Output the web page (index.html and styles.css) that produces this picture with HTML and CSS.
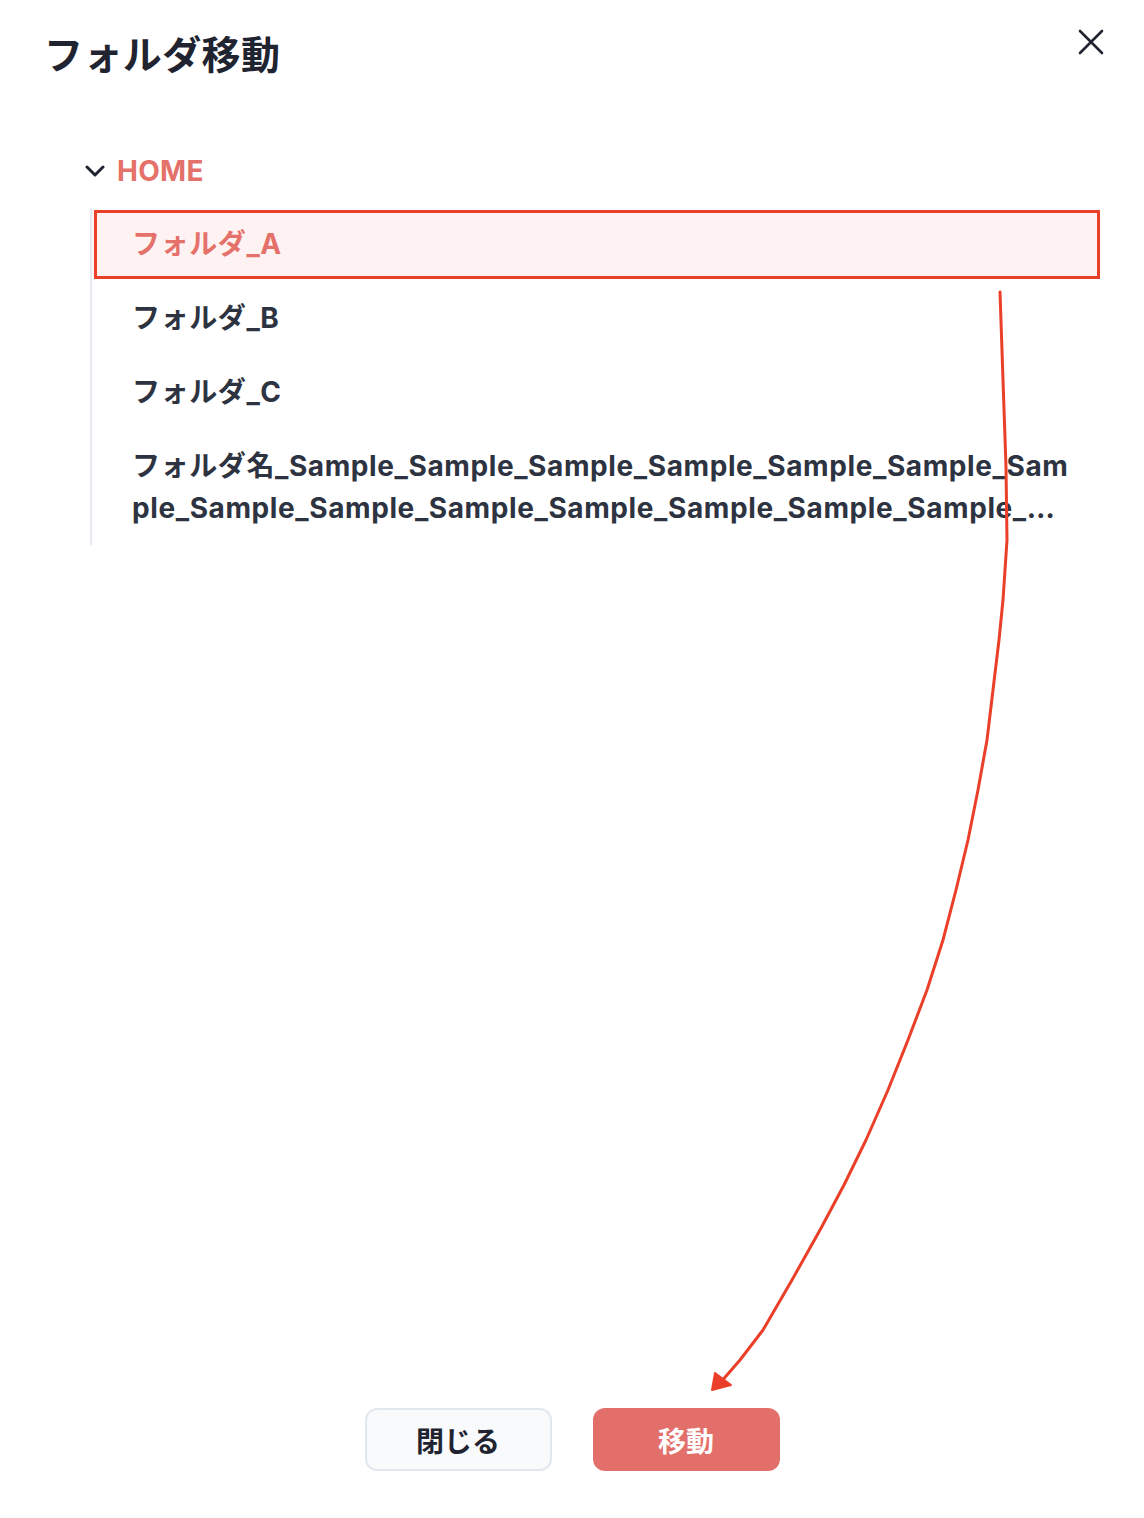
FILE: index.html
```html
<!DOCTYPE html>
<html lang="ja">
<head>
    <meta charset="UTF-8">
    <meta name="viewport" content="width=device-width, initial-scale=1.0">
    <title>フォルダ移動</title>
    <link rel="stylesheet" href="styles.css">
</head>
<body>
    <div class="modal">
        <div class="modal-header">
            <h1 class="modal-title">フォルダ移動</h1>
            <button class="close-btn" aria-label="閉じる">
                <svg width="26" height="26" viewBox="0 0 26 26">
                    <path d="M2 2 L24 24 M24 2 L2 24" stroke="#1f2430" stroke-width="2.6" stroke-linecap="round" fill="none"/>
                </svg>
            </button>
        </div>

        <div class="tree">
            <div class="tree-root">
                <svg class="chevron" width="20" height="12" viewBox="0 0 20 12">
                    <path d="M2 2 L10 10 L18 2" stroke="#1f2430" stroke-width="3" stroke-linecap="round" stroke-linejoin="round" fill="none"/>
                </svg>
                <span class="tree-root-label">HOME</span>
            </div>
            <ul class="folder-list">
                <li class="folder selected">フォルダ_A</li>
                <li class="folder">フォルダ_B</li>
                <li class="folder">フォルダ_C</li>
                <li class="folder"><span class="clamp">フォルダ名_Sample_Sample_Sample_Sample_Sample_Sample_Sample_Sample_Sample_Sample_Sample_Sample_Sample_Sample_Sample_Sample_Sample</span></li>
            </ul>
        </div>

        <div class="modal-footer">
            <button class="btn btn-secondary">閉じる</button>
            <button class="btn btn-primary">移動</button>
        </div>
    </div>

    <!-- 注釈 -->
    <svg class="annotation" width="1144" height="1518" viewBox="0 0 1144 1518">
        <rect x="95.5" y="211.5" width="1003" height="66" fill="none" stroke="#ea3f28" stroke-width="3"/>
        <polyline points="1000,292 1003,380 1006,467 1007,540 1003,600 999,640 993,690 987,740 978,790 968,840 956,890 943,940 927,990 908,1040 888,1090 866,1140 844,1185 820,1230 792,1280 763,1330 740,1360 720,1383"
            fill="none" stroke="#ea3f28" stroke-width="3" stroke-linecap="round" stroke-linejoin="round"/>
        <polygon points="712,1390 715,1373 731,1385" fill="#ea3f28" stroke="#ea3f28" stroke-width="2" stroke-linejoin="round"/>
    </svg>
</body>
</html>
```

FILE: styles.css
```css
* {
    box-sizing: border-box;
}

body {
    margin: 0;
    background: #fff;
    font-family: "Inter", "Noto Sans CJK JP", sans-serif;
    color: #2d3340;
}

.modal {
    position: relative;
    height: 1518px;
    display: flex;
    flex-direction: column;
    padding: 28px 44px 47px 46px;
}

.modal-header {
    display: flex;
    justify-content: space-between;
    align-items: flex-start;
}

.modal-title {
    margin: 0 0 0 -2px;
    font-size: 39px;
    line-height: 53px;
    font-weight: 700;
    color: #1f2430;
    letter-spacing: 0.4px;
}

.close-btn {
    border: none;
    background: none;
    padding: 0;
    margin: 1px -4px 0 0;
    width: 26px;
    height: 26px;
    cursor: pointer;
}

.tree {
    flex: 1;
    margin-top: 70px;
}

.tree-root {
    display: flex;
    align-items: center;
    height: 40px;
    padding-left: 39px;
}

.chevron {
    margin-right: 12px;
}

.tree-root-label {
    font-size: 28px;
    font-weight: 700;
    color: #e5716b;
    letter-spacing: 0.3px;
}

.folder-list {
    list-style: none;
    margin: 17px 0 0 44px;
    padding: 3px 0 4px 0;
    border-left: 2px solid #e6e9f0;
    display: flex;
    flex-direction: column;
    gap: 8px;
}

.folder {
    padding: 12px 28px 12px 40px;
    font-size: 28px;
    line-height: 42px;
    font-weight: 700;
    color: #2d3340;
    letter-spacing: 0.6px;
}

.folder.selected {
    background: #fef3f2;
    color: #e5716b;
}

.clamp {
    display: -webkit-box;
    -webkit-box-orient: vertical;
    -webkit-line-clamp: 2;
    overflow: hidden;
    word-break: break-all;
}

.modal-footer {
    display: flex;
    justify-content: center;
    gap: 41px;
    padding-right: 2px;
}

.btn {
    width: 187px;
    height: 63px;
    border-radius: 12px;
    font-family: "Inter", "Noto Sans CJK JP", sans-serif;
    font-size: 28px;
    font-weight: 700;
    cursor: pointer;
}

.btn-secondary {
    background: #f8fafc;
    border: 2px solid #e2e8f0;
    color: #1f2430;
}

.btn-primary {
    background: #e36f6a;
    border: none;
    color: #fff;
}

/* 注釈レイヤー */
.annotation {
    position: absolute;
    top: 0;
    left: 0;
    pointer-events: none;
}
```
